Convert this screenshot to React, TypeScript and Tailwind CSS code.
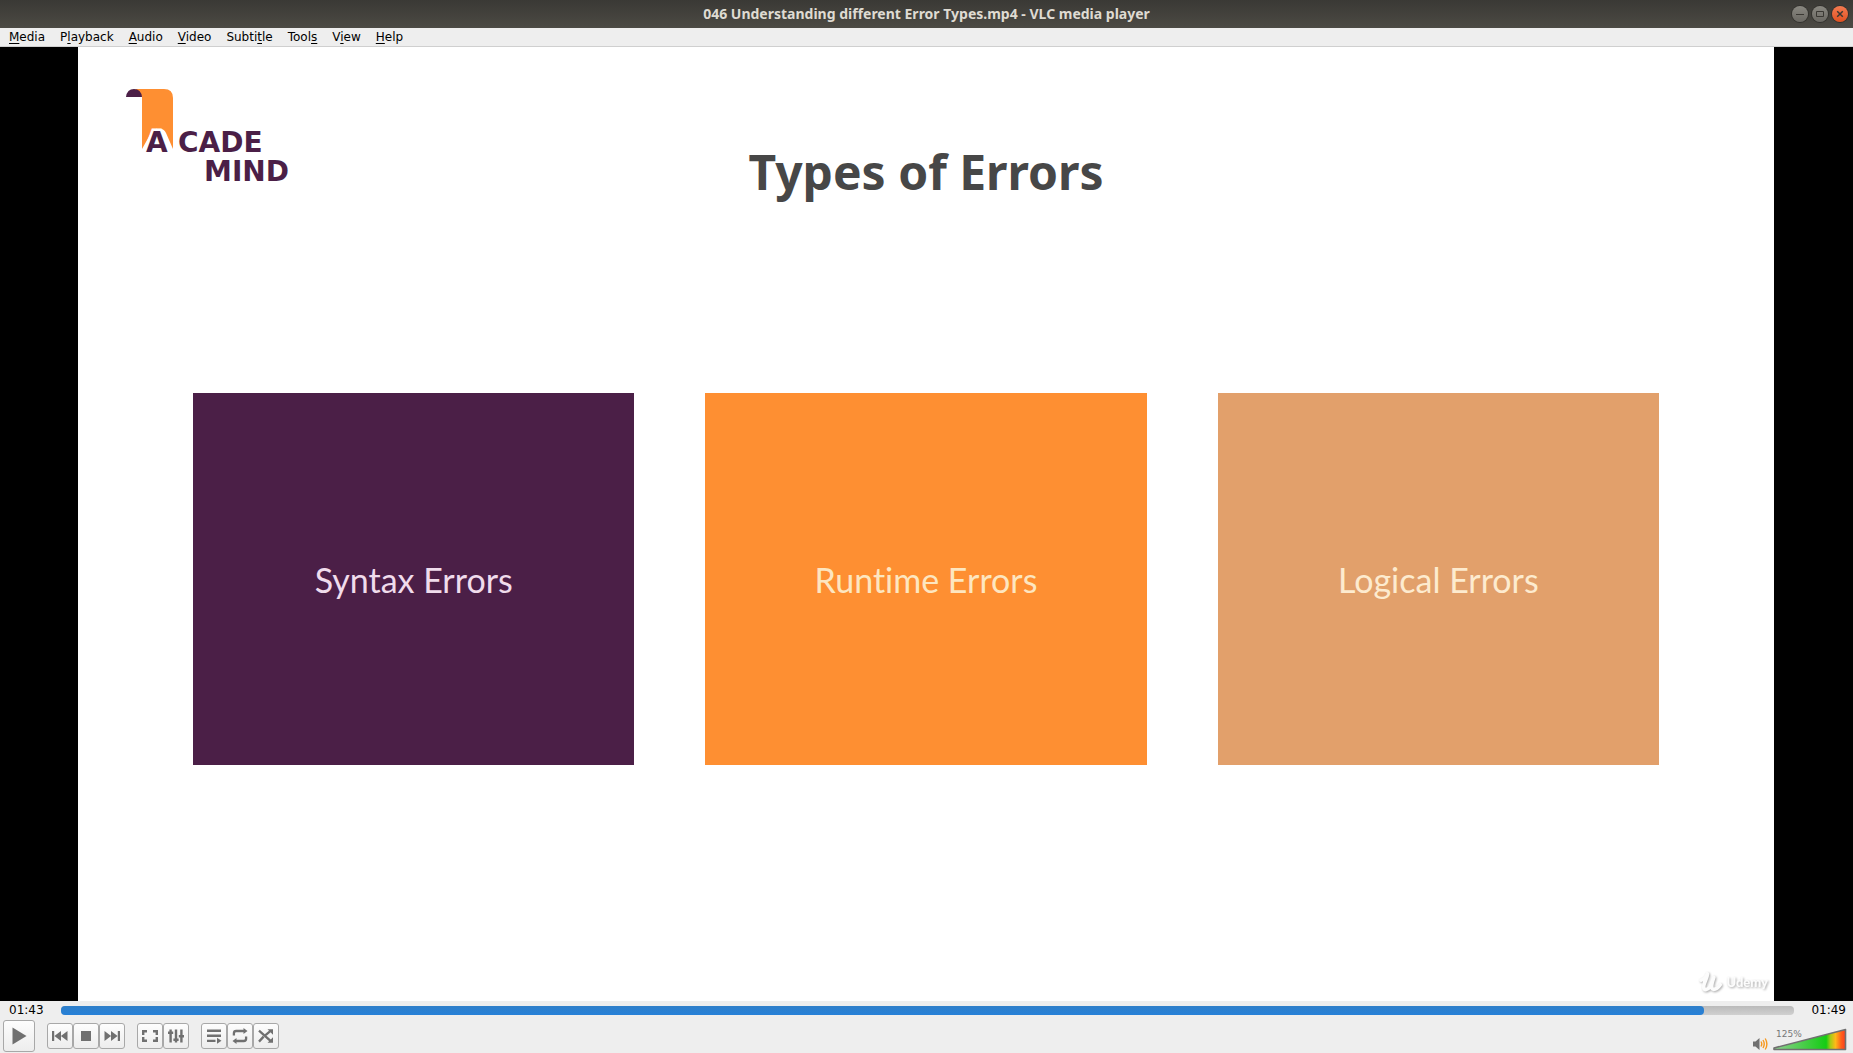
import { useState, type ReactNode } from "react";

const menus = [
  ["", "M", "edia"],
  ["P", "l", "ayback"],
  ["", "A", "udio"],
  ["", "V", "ideo"],
  ["Subti", "t", "le"],
  ["Tool", "s", ""],
  ["V", "i", "ew"],
  ["", "H", "elp"],
];

const cards = [
  { label: "Syntax Errors", style: "bg-[#4b1f47] text-[#f0dcec]" },
  { label: "Runtime Errors", style: "bg-[#fe8f32] text-[#fde6c0]" },
  { label: "Logical Errors", style: "bg-[#e2a06b] text-[#fdebcf]" },
];

function WindowButton({ label, close, children }: { label: string; close?: boolean; children: ReactNode }) {
  return (
    <button
      aria-label={label}
      className={
        close
          ? "size-4 rounded-full bg-linear-to-b from-[#f47b50] to-[#e0501f] shadow-[0_0_0_1px_#33322e]"
          : "size-4 rounded-full bg-linear-to-b from-[#8a8881] to-[#6a6862] shadow-[0_0_0_1px_#33322e]"
      }
    >
      <svg viewBox="0 0 16 16" className="size-4" fill="none" stroke="#3a3833">
        {children}
      </svg>
    </button>
  );
}

function TitleBar() {
  return (
    <header className="grid h-7 shrink-0 grid-cols-[1fr_auto_1fr] items-center bg-linear-to-b from-[#3a3935] to-[#4c4a44] px-[5px]">
      <h1 className="col-start-2 font-['Noto_Sans',sans-serif] text-sm font-bold text-[#dfdbd2]">
        046 Understanding different Error Types.mp4 - VLC media player
      </h1>
      <div className="flex justify-end gap-1">
        <WindowButton label="Minimize">
          <path d="M4 8.5h8" />
        </WindowButton>
        <WindowButton label="Maximize">
          <path d="M4.5 5.5h7v5h-7z" />
        </WindowButton>
        <WindowButton label="Close" close>
          <path d="M5.2 5.2l5.6 5.6M10.8 5.2l-5.6 5.6" strokeWidth="1.5" />
        </WindowButton>
      </div>
    </header>
  );
}

function MenuBar() {
  return (
    <nav className="flex h-[19px] shrink-0 items-center gap-[15px] border-b border-[#cfcfcf] bg-[#eeeeee] px-[9px]">
      {menus.map(([before, key, after]) => (
        <button key={before + key + after} className="text-xs leading-4 text-black">
          {before}
          <span className="underline underline-offset-2">{key}</span>
          {after}
        </button>
      ))}
    </nav>
  );
}

function AcademindLogo() {
  return (
    <svg viewBox="0 0 170 100" className="h-[100px] w-[170px]" role="img" aria-label="Academind">
      <path d="M9 2H38Q47 2 47 11V62L40 46Q38 42 35 42H30Q27 42 25 46L16 62V10Z" fill="#fe8f32" />
      <path d="M0 10Q1 2 8 2Q15 2 16 10Z" fill="#4b1f47" />
      <g fill="#4b1f47" fontFamily="'DejaVu Sans', sans-serif" fontWeight="700" fontSize="28">
        <text x="20" y="65" stroke="#fff" strokeWidth="5" paintOrder="stroke">A</text>
        <text x="52" y="65">CADE</text>
        <text x="163" y="94" textAnchor="end">MIND</text>
      </g>
    </svg>
  );
}

function UdemyMark() {
  return (
    <div className="absolute right-[6px] bottom-2 flex items-center gap-[3px] drop-shadow-[1px_1px_1px_#aaaaaa]">
      <svg viewBox="0 0 26 24" className="h-[22px] w-6" fill="none" stroke="#fcfcfc" strokeWidth="4" strokeLinecap="round" strokeLinejoin="round" aria-hidden="true">
        <path d="M2 10C6 9 8 6 9 3C10 6 5 13 5 17C5 22 9 21 12 17L16 7C14 13 12 20 16 20C19 20 21 18 23 15" />
      </svg>
      <span className="font-['Lato',sans-serif] text-[13px] leading-4 font-black text-[#fcfcfc]">Udemy</span>
    </div>
  );
}

function Slide() {
  return (
    <section className="relative flex aspect-video h-full flex-col bg-white">
      <div className="grid grid-cols-[1fr_auto_1fr] items-start px-12 pt-10">
        <AcademindLogo />
        <h2 className="pt-[53px] font-['Noto_Sans',sans-serif] text-[48px] leading-[64px] font-bold text-[#474747]">
          Types of Errors
        </h2>
      </div>
      <div className="mt-[189px] grid grid-cols-3 gap-[71px] px-[115px]">
        {cards.map((card) => (
          <div
            key={card.label}
            className={`flex aspect-[441/372] items-center justify-center font-['Lato',sans-serif] text-[34px] [font-variant-ligatures:none] ${card.style}`}
          >
            {card.label}
          </div>
        ))}
      </div>
      <UdemyMark />
    </section>
  );
}

function SeekBar() {
  const [percent, setPercent] = useState(94.8);
  return (
    <div className="flex items-center gap-[17px] pt-px pr-[7px] pl-[9px]">
      <time className="text-xs leading-[17px] text-black">01:43</time>
      <div className="relative h-[9px] flex-1 rounded-[4px] bg-linear-to-b from-[#bababa] to-[#d0d0d0]">
        <div
          className="h-full rounded-[4px] bg-linear-to-b from-[#2f7fc9] to-[#2680d8]"
          style={{ width: `${percent}%` }}
        />
        <input
          type="range"
          aria-label="Position"
          step="0.1"
          value={percent}
          onChange={(e) => setPercent(Number(e.target.value))}
          className="absolute inset-0 h-full w-full opacity-0"
        />
      </div>
      <time className="text-xs leading-[17px] text-black">01:49</time>
    </div>
  );
}

function ToolButton({ label, large, children }: { label: string; large?: boolean; children: ReactNode }) {
  return (
    <button
      aria-label={label}
      className={
        large
          ? "flex size-8 items-center justify-center rounded-[3px] border border-[#a8a8a8] bg-linear-to-b from-[#fdfdfd] to-[#ededed]"
          : "flex size-[26px] items-center justify-center rounded-[3px] border border-[#a8a8a8] bg-linear-to-b from-[#fdfdfd] to-[#ededed]"
      }
    >
      <svg viewBox={large ? "0 0 30 30" : "0 0 24 24"} className={large ? "size-[30px]" : "size-6"} fill="#707070">
        {children}
      </svg>
    </button>
  );
}

function Volume() {
  return (
    <div className="mr-[6px] flex items-end gap-1 pb-px">
      <svg viewBox="0 0 16 14" className="h-[14px] w-4" fill="none" aria-hidden="true">
        <path d="M0 4.5H2.5L6.5 1V13L2.5 9.5H0Z" fill="#707070" />
        <path d="M8 4.5Q9.5 7 8 9.5M10 3Q12.5 7 10 11M12.2 1.5Q15.6 7 12.2 12.5" stroke="#f7981d" strokeWidth="1.4" />
      </svg>
      <div className="relative">
        <svg viewBox="0 0 74 23" className="h-[23px] w-[74px]" aria-hidden="true">
          <defs>
            <linearGradient id="level">
              <stop offset="0" stopColor="#8fd08f" />
              <stop offset="0.73" stopColor="#14cc14" />
              <stop offset="0.79" stopColor="#a6cc14" />
              <stop offset="0.86" stopColor="#ffb917" />
              <stop offset="0.94" stopColor="#ff5f1a" />
              <stop offset="1" stopColor="#fb3c1c" />
            </linearGradient>
          </defs>
          <path d="M1 20L72.5 1.5V21.5H1Z" fill="url(#level)" stroke="#707070" strokeWidth="1.6" strokeLinejoin="round" />
        </svg>
        <span className="absolute top-px left-[3px] text-[9px] leading-[10px] text-[#777777]">125%</span>
        <input type="range" aria-label="Volume" min="0" max="125" defaultValue="125" className="absolute inset-0 h-full w-full opacity-0" />
      </div>
    </div>
  );
}

function Controls() {
  return (
    <div className="flex items-end justify-between pl-[3px]">
      <div className="flex items-center gap-3">
        <ToolButton label="Play" large>
          <path d="M8.5 6.5L22.5 15L8.5 23.5Z" />
        </ToolButton>
        <div className="flex">
          <ToolButton label="Previous">
            <path d="M4 7h2.2v10H4zM13 7v10L6.4 12zM19.5 7v10L12.9 12z" />
          </ToolButton>
          <ToolButton label="Stop">
            <path d="M7 7h10v10H7z" />
          </ToolButton>
          <ToolButton label="Next">
            <path d="M17.8 7H20v10h-2.2zM11 7v10L17.6 12zM4.5 7v10L11.1 12z" />
          </ToolButton>
        </div>
        <div className="flex">
          <ToolButton label="Fullscreen">
            <path d="M4 6h5v2.4H6.4V11H4zM20 6h-5v2.4h2.6V11H20zM4 18h5v-2.4H6.4V13H4zM20 18h-5v-2.4h2.6V13H20z" />
          </ToolButton>
          <ToolButton label="Extended settings">
            <path d="M5.4 5.5h2.4v13H5.4zM10.8 5.5h2.4v13h-2.4zM16.2 5.5h2.4v13h-2.4zM4 7.5h5.2V10H4zM9.4 14.5h5.2V17H9.4zM14.8 11H20v2.4h-5.2z" />
          </ToolButton>
        </div>
        <div className="flex">
          <ToolButton label="Playlist">
            <path d="M5 5.5h14v2.4H5zM5 10.6h14V13H5zM5 15.7h8.5v2.4H5zM15 13.8l4.5 3-4.5 3z" />
          </ToolButton>
          <ToolButton label="Loop">
            <path d="M5.9 11.5V9.3Q5.9 7 8.2 7H17M18.1 12.5v2.2q0 2.3-2.3 2.3H7" fill="none" stroke="#707070" strokeWidth="2.3" />
            <path d="M15.5 4L19.5 7L15.5 10zM8.5 14L4.5 17L8.5 20z" />
          </ToolButton>
          <ToolButton label="Random">
            <path d="M5 17.6L9.6 12.6M5 6.6L16.8 17.2M10 12.4L16 7.4" fill="none" stroke="#707070" strokeWidth="2.3" />
            <path d="M13.5 5.3h5.5v5.5zM19 13.2v5.5h-5.5z" />
          </ToolButton>
        </div>
      </div>
      <Volume />
    </div>
  );
}

export default function App() {
  return (
    <div className="flex h-screen flex-col overflow-hidden bg-[#eeeeee] font-['DejaVu_Sans',sans-serif]">
      <TitleBar />
      <MenuBar />
      <main className="flex min-h-0 flex-1 justify-center bg-black pr-px">
        <Slide />
      </main>
      <footer className="flex shrink-0 flex-col gap-px bg-[#eeeeee] pb-px">
        <SeekBar />
        <Controls />
      </footer>
    </div>
  );
}
